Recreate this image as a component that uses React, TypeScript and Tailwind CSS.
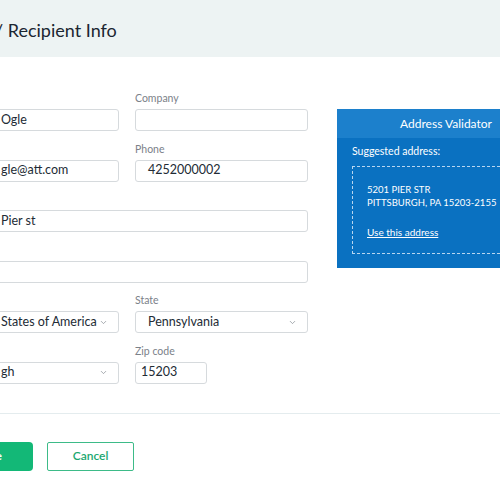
import { ChevronDown } from 'lucide-react';

// Field definitions for the recipient form (left column is clipped by the viewport)
interface Field {
  label: string;
  value: string;
  full?: boolean;
  select?: boolean;
  narrow?: boolean;
}

const rows: Field[][] = [
  [
    { label: 'Name', value: 'Ogle' },
    { label: 'Company', value: '' },
  ],
  [
    { label: 'Email', value: 'gle@att.com' },
    { label: 'Phone', value: '4252000002' },
  ],
  [{ label: 'Address', value: 'Pier st', full: true }],
  [{ label: 'Apt', value: '', full: true }],
  [
    { label: 'Country', value: 'States of America', select: true },
    { label: 'State', value: 'Pennsylvania', select: true },
  ],
  [
    { label: 'City', value: 'gh', select: true },
    { label: 'Zip code', value: '15203', narrow: true },
  ],
];

function FieldBox({ field, left }: { field: Field; left: boolean }) {
  const pad = left ? 'pl-[54px]' : field.narrow ? 'pl-[5px]' : 'pl-[12px]';
  return (
    <div className={field.full ? 'col-span-2' : ''}>
      <div className="h-[14px] text-[10.5px] leading-[14px] text-[#7b8189]">{field.label}</div>
      <div
        className={`mt-[4px] h-[22px] flex items-center justify-between rounded-[3px] border border-[#d6dadd] bg-white pr-[10px] text-[12.5px] text-[#222b35] ${pad} ${
          field.narrow ? 'w-[72px]' : 'w-full'
        }`}
      >
        <span className="whitespace-nowrap">{field.value}</span>
        {field.select && <ChevronDown className="w-[9px] h-[9px] text-[#8a9097]" strokeWidth={2} />}
      </div>
    </div>
  );
}

export default function App() {
  return (
    <div className="w-[500px] h-[500px] overflow-hidden bg-white font-['Lato',sans-serif]">
      {/* Modal header */}
      <div className="h-[57px] bg-[#edf3f3] flex items-center pt-[3px]">
        <h1 className="ml-[-5px] text-[18px] text-[#1b2631] whitespace-nowrap">/ Recipient Info</h1>
      </div>

      {/* Body */}
      <div className="flex ml-[-54px] pt-[34px]">
        <div className="w-[362px] shrink-0 grid grid-cols-2 gap-x-[16px] gap-y-[10.5px]">
          {rows.map((row, i) =>
            row.map((field, j) => <FieldBox key={`${i}-${j}`} field={field} left={j === 0} />)
          )}
        </div>

        {/* Address validator */}
        <div className="ml-[29px] mt-[18px] w-[218px] shrink-0 h-[159px] bg-[#0a71c1] text-white">
          <div className="h-[29px] bg-[#1c80cc] flex items-center justify-center text-[12px]">Address Validator</div>
          <div className="px-[15px]">
            <div className="h-[28px] flex items-center text-[10.5px]">Suggested address:</div>
            <div className="h-[88px] border border-dashed border-[#b9d6f0] px-[14px] pt-[16px] text-[9.5px] leading-[13px]">
              <div>5201 PIER STR</div>
              <div className="whitespace-nowrap">PITTSBURGH, PA 15203-2155</div>
              <div className="mt-[17px] text-[10px] underline">Use this address</div>
            </div>
          </div>
        </div>
      </div>

      {/* Divider */}
      <div className="mt-[29px] h-px bg-[#e4ecee]" />

      {/* Footer */}
      <div className="flex gap-[14px] ml-[-54px] mt-[28px]">
        <button className="w-[87px] h-[29px] rounded-[4px] bg-[#13b877] text-white text-[12px] font-bold">Save</button>
        <button className="w-[87px] h-[29px] rounded-[2px] border border-[#3dbb88] text-[#1aa86f] text-[12px] font-semibold">
          Cancel
        </button>
      </div>
    </div>
  );
}
